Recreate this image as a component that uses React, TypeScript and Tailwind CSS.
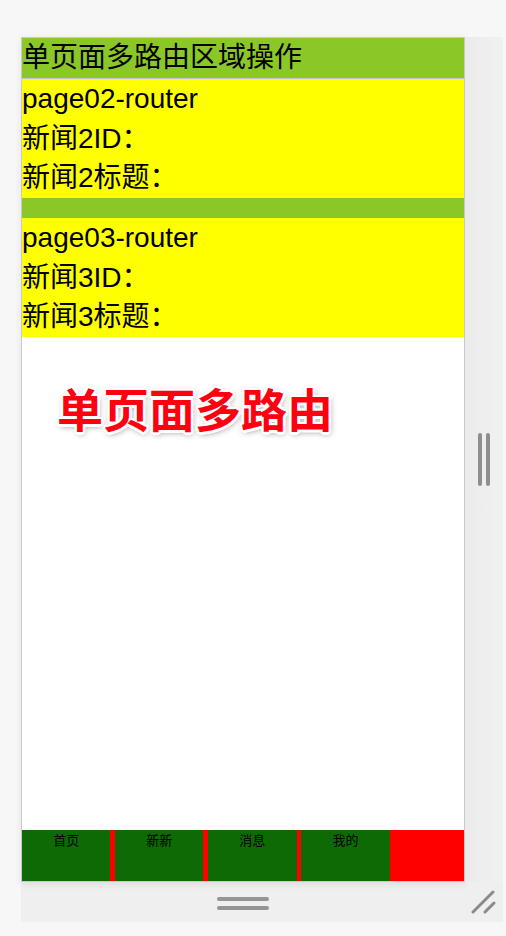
const tabs = ['首页', '新新', '消息', '我的'];

function NewsBlock({ n }: { n: string }) {
  return (
    <div className="bg-[#ffff00] text-[28px] leading-[39.67px] text-black">
      <div>page0{n}-router</div>
      <div>新闻{n}ID：</div>
      <div>新闻{n}标题：</div>
    </div>
  );
}

export default function App() {
  return (
    <div
      className="w-[506px] h-[936px] bg-[#f7f7f7] pt-[37px] pl-[21px]"
      style={{ fontFamily: '"Liberation Sans", "Noto Sans CJK SC", sans-serif' }}
    >
      <div className="w-[482px] h-[885px] bg-[#efefef] flex flex-col">
        <div className="flex h-[845px]">
          {/* phone screen */}
          <div className="w-[444px] h-[845px] border border-[#c9c9c9] bg-white flex flex-col shadow-[0_2px_8px_rgba(0,0,0,0.08)]">
            <div className="h-[41px] bg-[#8bc727] border-b border-[#c4c4cc] text-[28px] leading-[40px] text-black">
              单页面多路由区域操作
            </div>
            <NewsBlock n="2" />
            <div className="h-[20px] bg-[#8bc727]" />
            <NewsBlock n="3" />
            <div className="flex-1 bg-white pt-[45px] pl-[35px]">
              <div className="text-[46px] leading-[58px] font-bold text-[#ff0010] [text-shadow:2.5px_0_0_#fff,-2.5px_0_0_#fff,0_2.5px_0_#fff,0_-2.5px_0_#fff,2px_2px_0_#fff,-2px_-2px_0_#fff,2px_-2px_0_#fff,-2px_2px_0_#fff,1px_2px_6px_rgba(0,0,0,0.5)]">
                单页面多路由
              </div>
            </div>
            <div className="h-[51px] bg-[#ff0000] flex gap-[4.7px]">
              {tabs.map((t) => (
                <div key={t} className="w-1/5 bg-[#0e6a04] text-center text-[13px] leading-[21px] text-black">
                  {t}
                </div>
              ))}
            </div>
          </div>
          {/* right drag strip */}
          <div className="flex-1 flex items-center justify-center gap-[4px] bg-gradient-to-r from-[#ebebeb] to-[#f1f1f1]">
            <div className="w-[4px] h-[53px] rounded-full bg-[#8e8e8e]" />
            <div className="w-[4px] h-[53px] rounded-full bg-[#8e8e8e]" />
          </div>
        </div>
        {/* bottom drag strip */}
        <div className="flex-1 flex">
          <div className="w-[444px] flex flex-col items-center justify-center gap-[5px] pt-[2px]">
            <div className="w-[52px] h-[4px] rounded-full bg-[#959595]" />
            <div className="w-[52px] h-[4px] rounded-full bg-[#959595]" />
          </div>
          <div className="flex-1">
            <svg width="26" height="26" viewBox="0 0 26 26" className="ml-[6px] mt-[7px]">
              <line x1="2" y1="23" x2="22" y2="3" stroke="#8a8a8a" strokeWidth="3" strokeLinecap="round" />
              <line x1="14" y1="23" x2="23" y2="14" stroke="#8a8a8a" strokeWidth="3" strokeLinecap="round" />
            </svg>
          </div>
        </div>
      </div>
    </div>
  );
}
